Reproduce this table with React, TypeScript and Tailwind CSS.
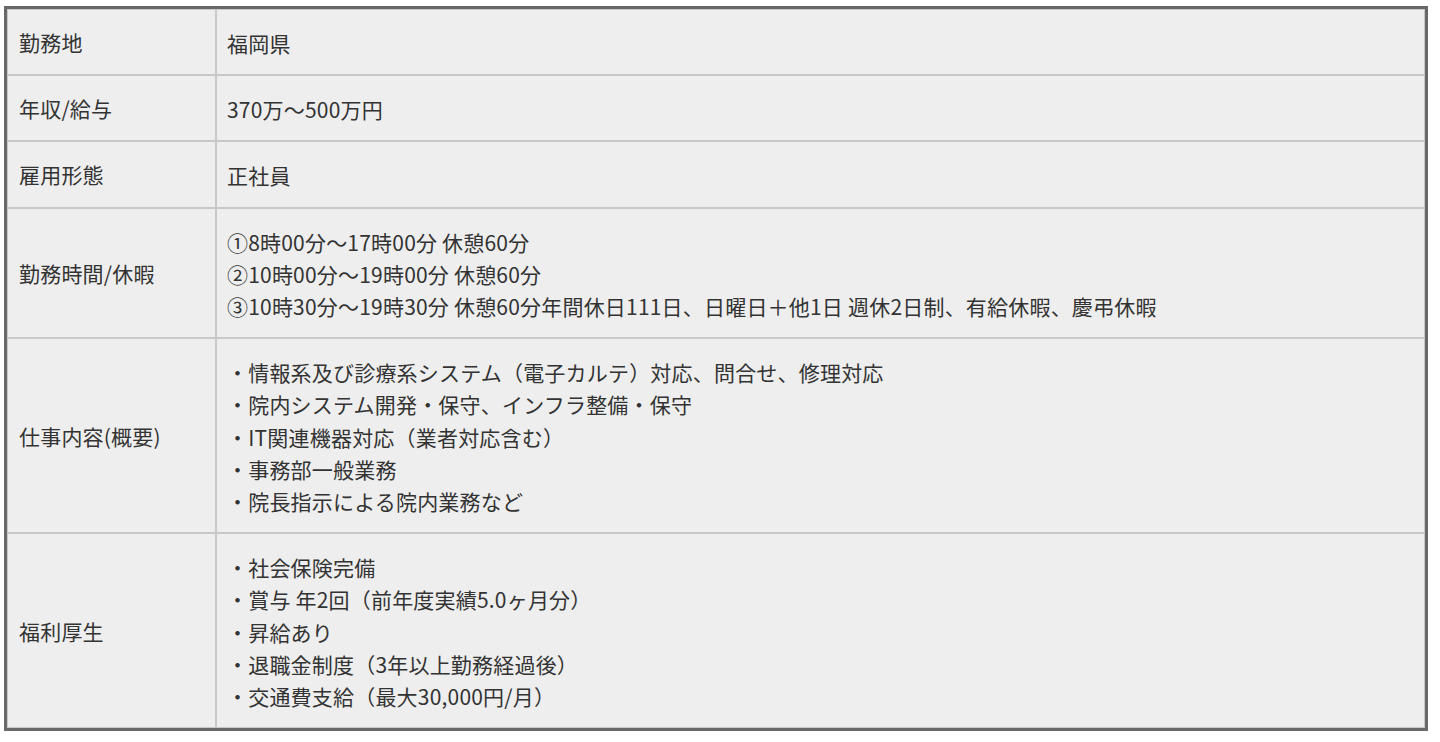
import React from 'react';

type Row = {
  label: string;
  lines: string[];
};

const rows: Row[] = [
  { label: '勤務地', lines: ['福岡県'] },
  { label: '年収/給与', lines: ['370万～500万円'] },
  { label: '雇用形態', lines: ['正社員'] },
  {
    label: '勤務時間/休暇',
    lines: [
      '①8時00分～17時00分 休憩60分',
      '②10時00分～19時00分 休憩60分',
      '③10時30分～19時30分 休憩60分年間休日111日、日曜日＋他1日 週休2日制、有給休暇、慶弔休暇',
    ],
  },
  {
    label: '仕事内容(概要)',
    lines: [
      '・情報系及び診療系システム（電子カルテ）対応、問合せ、修理対応',
      '・院内システム開発・保守、インフラ整備・保守',
      '・IT関連機器対応（業者対応含む）',
      '・事務部一般業務',
      '・院長指示による院内業務など',
    ],
  },
  {
    label: '福利厚生',
    lines: [
      '・社会保険完備',
      '・賞与 年2回（前年度実績5.0ヶ月分）',
      '・昇給あり',
      '・退職金制度（3年以上勤務経過後）',
      '・交通費支給（最大30,000円/月）',
    ],
  },
];

const App: React.FC = () => {
  return (
    <div className="min-h-[742px] bg-white pt-[6px] pl-[4px]">
      <div
        className="w-[1424px] border-[3px] border-[#686868] bg-[#eeeeee] text-[21px] leading-[32.2px] tracking-[0.2px] text-[#333333]"
        style={{ fontFamily: '"Noto Sans CJK JP", "Noto Sans", sans-serif' }}
      >
        {rows.map((row) => (
          <div key={row.label} className="grid grid-cols-[209px_1fr]">
            <div className="flex items-center border border-[#c8c8c8] px-[11px] py-[16px]">
              {row.label}
            </div>
            <div className="border border-[#c8c8c8] px-[10px] pt-[17px] pb-[15px]">
              {row.lines.map((line, i) => (
                <div key={i}>{line}</div>
              ))}
            </div>
          </div>
        ))}
      </div>
    </div>
  );
};

export default App;
